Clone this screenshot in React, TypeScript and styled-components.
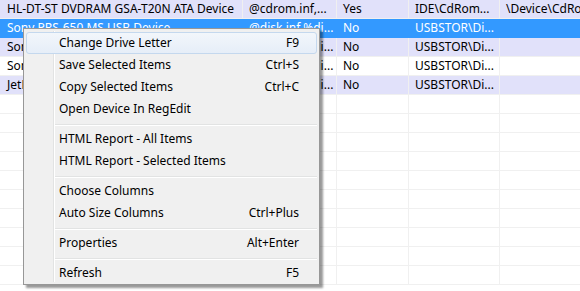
import styled, { createGlobalStyle } from 'styled-components';

const Global = createGlobalStyle`
  html, body {
    margin: 0;
    padding: 0;
    background: #ffffff;
    overflow: hidden;
  }
  body {
    font-family: "Noto Sans", "Liberation Sans", sans-serif;
    font-size: 12px;
    color: #000;
  }
`;

const Page = styled.div`
  position: relative;
  width: 580px;
  height: 291px;
  overflow: hidden;
`;

const Table = styled.div`
  display: flex;
  flex-direction: column;
`;

const Row = styled.div<{ $bg: string; $selected?: boolean }>`
  display: flex;
  height: 19px;
  background: ${(p) => p.$bg};
  color: ${(p) => (p.$selected ? '#ffffff' : '#000000')};
`;

const Cell = styled.div<{ $w: number; $selected?: boolean }>`
  flex: 0 0 ${(p) => p.$w}px;
  box-sizing: border-box;
  padding-left: 6px;
  line-height: 18px;
  white-space: nowrap;
  overflow: hidden;
  border-right: 1px solid ${(p) => (p.$selected ? '#3399ff' : '#f0f0f0')};
  border-bottom: 1px solid ${(p) => (p.$selected ? '#3399ff' : '#f0f0f0')};
  &:first-child {
    padding-left: 7px;
  }
`;

const Menu = styled.div`
  position: absolute;
  left: 23px;
  top: 28px;
  width: 297px;
  box-sizing: border-box;
  background: #f0f0f0;
  border: 1px solid #979797;
  padding: 3px 2px 0 2px;
  box-shadow: 3px 3px 2px rgba(0, 0, 0, 0.4);
  display: flex;
  flex-direction: column;
  &::before {
    content: '';
    position: absolute;
    top: 2px;
    bottom: 2px;
    left: 29px;
    width: 1px;
    background: #e2e3e3;
    box-shadow: 1px 0 0 #ffffff;
  }
`;

const Item = styled.div<{ $active?: boolean }>`
  position: relative;
  display: flex;
  align-items: center;
  justify-content: space-between;
  height: 22px;
  box-sizing: border-box;
  padding: 0 17px 0 32px;
  border: 1px solid ${(p) => (p.$active ? '#c4d8ee' : 'transparent')};
  border-radius: 3px;
  background: ${(p) =>
    p.$active ? 'linear-gradient(#f2f6fb, #e6eef8)' : 'transparent'};
  line-height: 20px;
  white-space: nowrap;
`;

const Shortcut = styled.span`
  text-align: right;
`;

const Separator = styled.div`
  height: 8px;
  display: flex;
  align-items: center;
  padding-left: 29px;
  &::after {
    content: '';
    flex: 1;
    height: 1px;
    background: #e2e3e3;
    box-shadow: 0 1px 0 #ffffff;
  }
`;

const widths = [243, 94, 72, 91, 120];

type RowData = { cells: string[]; bg: string; selected?: boolean };

const rows: RowData[] = [
  {
    cells: ['HL-DT-ST DVDRAM GSA-T20N ATA Device', '@cdrom.inf,...', 'Yes', 'IDE\\CdRom...', '\\Device\\CdRom0'],
    bg: '#e1e1fa',
  },
  {
    cells: ['Sony PRS-650 MS USB Device', '@disk.inf,%di...', 'No', 'USBSTOR\\Di...', ''],
    bg: '#3399ff',
    selected: true,
  },
  {
    cells: ['Sony PRS-650 SD USB Device', '@disk.inf,%di...', 'No', 'USBSTOR\\Di...', ''],
    bg: '#e1e1fa',
  },
  {
    cells: ['Sony PRS-650 USB Device', '@disk.inf,%di...', 'No', 'USBSTOR\\Di...', ''],
    bg: '#ffffff',
  },
  {
    cells: ['JetFlash Transcend 4GB USB Device', '@disk.inf,%di...', 'No', 'USBSTOR\\Di...', ''],
    bg: '#e1e1fa',
  },
];

const emptyRows = Array.from({ length: 10 }, () => ({ cells: ['', '', '', '', ''], bg: '#ffffff' }));

type MenuEntry = { label: string; key?: string; active?: boolean } | 'sep';

const menu: MenuEntry[] = [
  { label: 'Change Drive Letter', key: 'F9', active: true },
  { label: 'Save Selected Items', key: 'Ctrl+S' },
  { label: 'Copy Selected Items', key: 'Ctrl+C' },
  { label: 'Open Device In RegEdit' },
  'sep',
  { label: 'HTML Report - All Items' },
  { label: 'HTML Report - Selected Items' },
  'sep',
  { label: 'Choose Columns' },
  { label: 'Auto Size Columns', key: 'Ctrl+Plus' },
  'sep',
  { label: 'Properties', key: 'Alt+Enter' },
  'sep',
  { label: 'Refresh', key: 'F5' },
];

export default function App() {
  return (
    <>
      <Global />
      <Page>
        <Table>
          {[...rows, ...emptyRows].map((row, i) => (
            <Row key={i} $bg={row.bg} $selected={(row as RowData).selected}>
              {row.cells.map((c, j) => (
                <Cell key={j} $w={widths[j]} $selected={(row as RowData).selected}>
                  {c}
                </Cell>
              ))}
            </Row>
          ))}
        </Table>
        <Menu>
          {menu.map((m, i) =>
            m === 'sep' ? (
              <Separator key={i} />
            ) : (
              <Item key={i} $active={m.active}>
                <span>{m.label}</span>
                {m.key && <Shortcut>{m.key}</Shortcut>}
              </Item>
            )
          )}
        </Menu>
      </Page>
    </>
  );
}
